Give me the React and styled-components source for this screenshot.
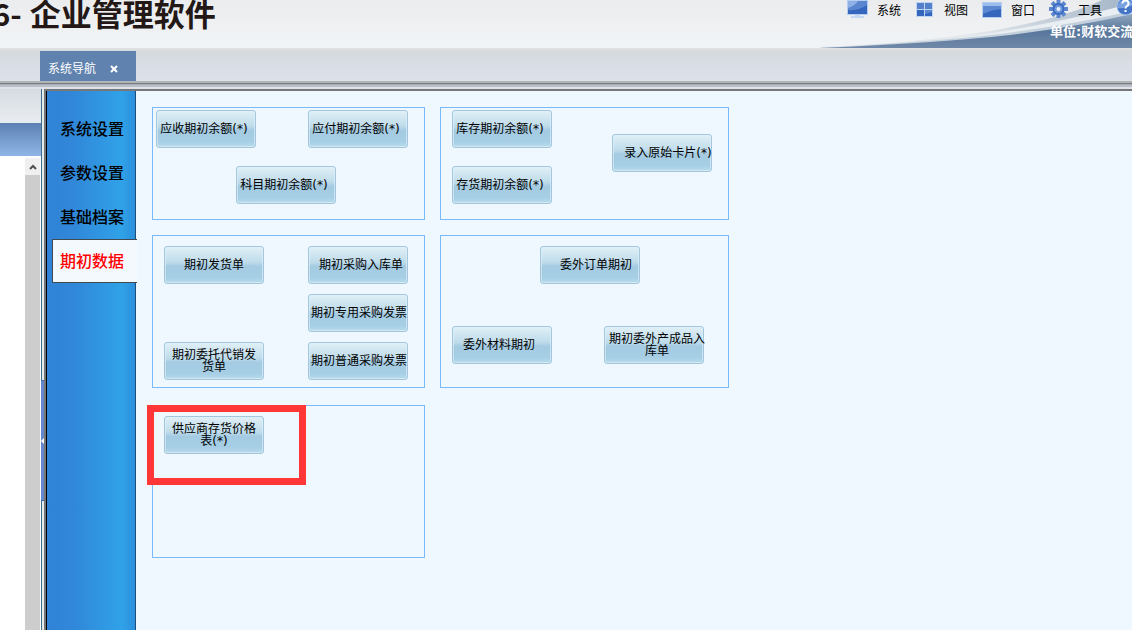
import { useState } from 'react';
import styled, { createGlobalStyle } from 'styled-components';

const TABS = ['系统设置', '参数设置', '基础档案', '期初数据'];

// columns / rows describe the flow chart of each module
const PANELS = [
  {
    name: 'finance',
    height: 113,
    padding: '2px 3px',
    columns: '80px 72px 100px',
    rows: '56px 38px',
    items: [
      { text: '应收期初余额(*)', col: 1, row: 1, trail: 4 },
      { text: '应付期初余额(*)', col: 3, row: 1, trail: 4 },
      { text: '科目期初余额(*)', col: 2, row: 2, trail: 4 },
    ],
  },
  {
    name: 'stock',
    height: 113,
    padding: '2px 11px',
    columns: '160px 100px',
    rows: '24px 32px 38px',
    items: [
      { text: '库存期初余额(*)', col: 1, row: 1, trail: 4 },
      { text: '录入原始卡片(*)', col: 2, row: 2, lead: 12 },
      { text: '存货期初余额(*)', col: 1, row: 3, trail: 4 },
    ],
  },
  {
    name: 'trade',
    height: 153,
    padding: '10px 11px',
    columns: '144px 100px',
    rows: '48px 48px 38px',
    items: [
      { text: '期初发货单', col: 1, row: 1 },
      { text: '期初采购入库单', col: 2, row: 1, lead: 6 },
      { text: '期初专用采购发票', col: 2, row: 2, lead: 2 },
      { text: '期初委托代销发\n货单', col: 1, row: 3 },
      { text: '期初普通采购发票', col: 2, row: 3, lead: 2 },
    ],
  },
  {
    name: 'outsourcing',
    height: 153,
    padding: '10px 11px',
    columns: '88px 64px 100px',
    rows: '80px 38px',
    items: [
      { text: '委外订单期初', col: 2, row: 1, lead: 12 },
      { text: '委外材料期初', col: 1, row: 2, trail: 6 },
      { text: '期初委外产成品入\n库单', col: 3, row: 2, lead: 6 },
    ],
  },
  {
    name: 'supplier',
    height: 153,
    padding: '10px 11px',
    columns: '100px',
    rows: '38px',
    marked: true,
    items: [{ text: '供应商存货价格\n表(*)', col: 1, row: 1 }],
  },
];

function MonitorIcon() {
  return (
    <svg width="21" height="18" viewBox="0 0 21 18" aria-hidden="true">
      <rect x="0" y="0" width="21" height="15" fill="#b4cdf0" />
      <rect x="1" y="1" width="19" height="13" fill="#3566bd" />
      <path d="M1 1h19v4Q12 11 1 10z" fill="#5a86d0" />
      <path d="M1 1h10Q8 6 1 8z" fill="#8fb0e4" />
      <path d="M8 15h5v1h4v2H4v-2h4z" fill="#c3d9f3" />
    </svg>
  );
}

function ViewIcon() {
  return (
    <svg width="17" height="18" viewBox="0 0 17 18" aria-hidden="true">
      <rect y="2" width="17" height="15" fill="#bdd5f3" />
      <path d="M1 3h7v6H1zM9 3h7v6H9z" fill="#5580ca" />
      <path d="M1 10h7v6H1zM9 10h7v6H9z" fill="#3566bd" />
      <path d="M9 10h7v2l-7 2z" fill="#5c88d1" />
    </svg>
  );
}

function WindowIcon() {
  return (
    <svg width="20" height="18" viewBox="0 0 20 18" aria-hidden="true">
      <rect y="2" width="20" height="16" fill="#b4cdf0" />
      <rect x="1" y="3" width="18" height="3" fill="#9cbcea" />
      <rect x="1" y="6" width="18" height="11" fill="#3566bd" />
      <path d="M1 6h18v3Q9 10 1 14z" fill="#5c88d1" />
    </svg>
  );
}

function GearIcon() {
  return (
    <svg width="19" height="18" viewBox="0 0 19 18" aria-hidden="true">
      <g stroke="#5c87cf" strokeWidth="4">
        <path d="M9.500 0v18M0 9h19M3 2.500l13 13M16 2.500l-13 13" />
      </g>
      <circle cx="9.500" cy="9" r="6" fill="#3b6bc0" />
      <circle cx="9.500" cy="9" r="4" fill="#6f99dc" />
      <circle cx="9.500" cy="9" r="2" fill="#e9f1fb" />
    </svg>
  );
}

function HelpIcon() {
  return (
    <svg width="19" height="18" viewBox="0 0 19 18" aria-hidden="true">
      <circle cx="9.500" cy="6.500" r="9" fill="#a9c5ee" />
      <circle cx="9.500" cy="6.500" r="8" fill="#4374c6" />
      <path d="M2 5a8 8 0 0 1 15 0Q10 9 2 8z" fill="#7ba2e0" />
      <path d="M6.500 3.500a3 3 0 1 1 4.500 2.500q-1.500 1-1.500 2.500M9.500 10v2" fill="none" stroke="#fff" strokeWidth="2" />
    </svg>
  );
}

const MENU = [
  { text: '系统', Icon: MonitorIcon },
  { text: '视图', Icon: ViewIcon },
  { text: '窗口', Icon: WindowIcon },
  { text: '工具', Icon: GearIcon },
];

function App() {
  const [active, setActive] = useState('期初数据');

  return (
    <Page>
      <GlobalStyle />
      <Header>
        <Swoosh viewBox="0 0 312 48" aria-hidden="true">
          <defs>
            <linearGradient id="wave" x1="0" y1="0" x2="0" y2="1">
              <stop offset="0" stopColor="#8fa5bd" />
              <stop offset="0.500" stopColor="#58779c" />
              <stop offset="1" stopColor="#7088a8" />
            </linearGradient>
            <linearGradient id="sky" x1="0" y1="0" x2="1" y2="0">
              <stop offset="0.500" stopColor="#e2e7eb" />
              <stop offset="1" stopColor="#a3b4c6" />
            </linearGradient>
          </defs>
          <path d="M0 47Q90 44 170 31Q245 18 282 0H312V48H0z" fill="url(#sky)" />
          <path d="M30 46Q130 41 190 30Q260 18 312 3V48H30z" fill="#e9eef2" />
          <path d="M0 48Q120 41 180 34Q250 25 312 11V48z" fill="#c3d0dc" />
          <path d="M0 48Q120 43 190 35Q255 27 312 14V48z" fill="url(#wave)" />
        </Swoosh>
        <Title>
          <span>6-</span>
          <span>企业管理软件</span>
        </Title>
        <Tools>
          <Menu>
            {MENU.map(({ text, Icon }) => (
              <MenuButton key={text} type="button">
                <IconBox><Icon /></IconBox>
                {text}
              </MenuButton>
            ))}
            <MenuButton type="button" aria-label="帮助">
              <IconBox><HelpIcon /></IconBox>
            </MenuButton>
          </Menu>
          <Company>单位:财软交流</Company>
        </Tools>
      </Header>
      <TabStrip>
        <PageTab>
          系统导航
          <CloseButton type="button" aria-label="关闭">
            <svg width="8" height="8" viewBox="0 0 8 8">
              <path d="M1 1l6 6M7 1l-6 6" stroke="#fff" strokeWidth="2" />
            </svg>
          </CloseButton>
        </PageTab>
      </TabStrip>
      <Rule />
      <Body>
        <LeftPane>
          <PaneHead />
          <PaneTitle />
          <PaneContent>
            <ScrollBar>
              <ScrollButton type="button" aria-label="向上滚动">
                <svg width="8" height="6" viewBox="0 0 8 6">
                  <path d="M1 5l3-3 3 3" fill="none" stroke="#505050" strokeWidth="2" />
                </svg>
              </ScrollButton>
            </ScrollBar>
          </PaneContent>
        </LeftPane>
        <Splitter>
          <SplitHandle type="button" aria-label="收起">
            <svg width="3" height="6" viewBox="0 0 3 6">
              <path d="M3 0v6L0 3z" fill="#fff" />
            </svg>
          </SplitHandle>
        </Splitter>
        <Workspace>
          <SideNav>
            {TABS.map((tab) => (
              <SideButton
                key={tab}
                type="button"
                $active={tab === active}
                onClick={() => setActive(tab)}
              >
                {tab}
              </SideButton>
            ))}
          </SideNav>
          <Main>
            {PANELS.map((panel) => (
              <Panel
                key={panel.name}
                $height={panel.height}
                $padding={panel.padding}
                $columns={panel.columns}
                $rows={panel.rows}
              >
                {panel.items.map((item) => (
                  <FlowButton
                    key={item.text}
                    type="button"
                    $col={item.col}
                    $row={item.row}
                    $lead={item.lead}
                    $trail={item.trail}
                  >
                    {item.text}
                  </FlowButton>
                ))}
                {panel.marked && <Marker />}
              </Panel>
            ))}
          </Main>
        </Workspace>
      </Body>
    </Page>
  );
}

export default App;

const GlobalStyle = createGlobalStyle`
  * {
    box-sizing: border-box;
  }

  body {
    margin: 0;
    font-family: 'DejaVu Sans', 'Noto Sans CJK SC', sans-serif;
    font-size: 12px;
    color: #000;
  }

  button {
    margin: 0;
    padding: 0;
    border: none;
    background: none;
    font: inherit;
    color: inherit;
  }
`;

const Page = styled.div`
  display: flex;
  flex-direction: column;
  height: 100vh;
  overflow: hidden;
`;

const Header = styled.header`
  position: relative;
  display: flex;
  justify-content: space-between;
  height: 48px;
  overflow: hidden;
  background: linear-gradient(#ebecee, #f1f4f6);
`;

const Swoosh = styled.svg`
  position: absolute;
  right: 0;
  bottom: 0;
  width: 312px;
  height: 48px;
`;

const Title = styled.h1`
  display: flex;
  gap: 8px;
  margin: 0 0 0 -8px;
  font-family: 'Noto Sans CJK SC', sans-serif;
  font-size: 31px;
  font-weight: 700;
  line-height: 26px;
  color: #231815;
  white-space: nowrap;
`;

const Tools = styled.div`
  position: relative;
  flex: 0 0 285px;
  overflow: hidden;
`;

const Menu = styled.nav`
  display: flex;
  height: 22px;
`;

const MenuButton = styled.button`
  display: flex;
  flex: 0 0 67px;
  align-items: center;
  gap: 9px;
  line-height: 22px;
  white-space: nowrap;
`;

const IconBox = styled.span`
  display: flex;
  justify-content: center;
  width: 21px;
  height: 22px;
`;

const Company = styled.div`
  padding-left: 203px;
  font-size: 13px;
  font-weight: 700;
  line-height: 20px;
  color: #fff;
  white-space: nowrap;
`;

const TabStrip = styled.div`
  display: flex;
  align-items: flex-end;
  height: 33px;
  padding-left: 40px;
  border-top: 2px solid #dfe1e0;
  background: linear-gradient(#d5dadd, #d8dce4 40%, #dde1e9);
`;

const PageTab = styled.div`
  display: flex;
  align-items: center;
  gap: 14px;
  width: 96px;
  height: 30px;
  padding: 6px 8px 0;
  background: #5f82ae;
  color: #fff;
  line-height: 24px;
  white-space: nowrap;
`;

const CloseButton = styled.button`
  display: flex;
  align-items: center;
`;

const Rule = styled.div`
  flex: 0 0 8px;
  background: linear-gradient(
    #b0b5b8 0 2px,
    #777b80 2px 3px,
    #a9adb5 3px 4px,
    #b9bec8 4px 6px,
    #dde1ea 6px 8px
  );
`;

const Body = styled.div`
  display: flex;
  flex: 1;
  min-height: 0;
`;

const LeftPane = styled.aside`
  display: flex;
  flex: 0 0 41px;
  flex-direction: column;
`;

const PaneHead = styled.div`
  height: 34px;
  background: linear-gradient(#d5dce1, #e9edf1);
`;

const PaneTitle = styled.div`
  height: 33px;
  background: linear-gradient(#5d80b2, #8fb5e7);
`;

const PaneContent = styled.div`
  display: flex;
  flex: 1;
  justify-content: flex-end;
  padding: 2px 1px 0 0;
  background: #fff;
`;

const ScrollBar = styled.div`
  width: 15px;
  background: #cdcdcd;
`;

const ScrollButton = styled.button`
  display: flex;
  align-items: center;
  justify-content: center;
  width: 100%;
  height: 17px;
  background: #f0f0f0;
`;

const Splitter = styled.div`
  flex: 0 0 3px;
  padding-top: 291px;
  border-left: 1px solid #3d6f8c;
  background: #e4ecee;
`;

const SplitHandle = styled.button`
  display: flex;
  align-items: center;
  width: 3px;
  height: 121px;
  margin-left: -1px;
  border: solid #3b66a3;
  border-width: 1px 0;
  background: #6488cf;
`;

const Workspace = styled.div`
  display: flex;
  flex: 1;
  min-width: 0;
  border: solid #777;
  border-width: 2px 0 0 2px;
`;

const SideNav = styled.nav`
  display: flex;
  flex: 0 0 90px;
  flex-direction: column;
  padding: 16px 0 0 5px;
  border: solid #000;
  border-width: 0 1px;
  border-right-color: #1d4f78;
  background: linear-gradient(90deg, #3083d6, #3187d9 30%, #30a2e8 85%, #2b8fdb);
`;

const SideButton = styled.button`
  position: relative;
  z-index: 1;
  height: 44px;
  margin-right: -2px;
  padding: 0 6px 2px 0;
  border: ${({ $active }) => ($active ? '1px solid #3f4a52' : '1px solid transparent')};
  border-right: none;
  background: ${({ $active }) => ($active ? '#f4f9fe' : 'none')};
  color: ${({ $active }) => ($active ? '#f00' : '#000')};
  font-family: 'Noto Sans CJK SC', sans-serif;
  font-size: 16px;
  font-weight: 500;
  line-height: 40px;
  white-space: nowrap;
`;

const Main = styled.main`
  display: grid;
  flex: 1;
  grid-template-columns: 273px 289px;
  grid-template-rows: 112px 154px 153px;
  align-content: start;
  gap: 16px 15px;
  padding: 16px;
  background: #f0f8ff;
`;

const Panel = styled.section`
  position: relative;
  display: grid;
  grid-template-columns: ${({ $columns }) => $columns};
  grid-template-rows: ${({ $rows }) => $rows};
  height: ${({ $height }) => $height}px;
  padding: ${({ $padding }) => $padding};
  border: 1px solid #7abafa;
`;

const FlowButton = styled.button`
  display: flex;
  grid-column: ${({ $col }) => $col};
  grid-row: ${({ $row }) => $row};
  align-items: center;
  justify-content: center;
  width: 100px;
  height: 38px;
  padding-left: ${({ $lead }) => $lead || 0}px;
  padding-right: ${({ $trail }) => $trail || 0}px;
  border: 1px solid #a3c6dd;
  border-radius: 3px;
  background: linear-gradient(#e0eff6, #bfdceb 42%, #a4cbe2 54%, #a6cee5 85%, #b9dbec);
  box-shadow: inset 0 0 0 1px rgba(225, 241, 250, 0.6);
  line-height: 12px;
  text-align: center;
  white-space: pre;
`;

// red frame drawn over the supplier price entry
const Marker = styled.div`
  position: absolute;
  top: -1px;
  left: -6px;
  width: 159px;
  height: 80px;
  border: 7px solid #ff3737;
  pointer-events: none;
`;
